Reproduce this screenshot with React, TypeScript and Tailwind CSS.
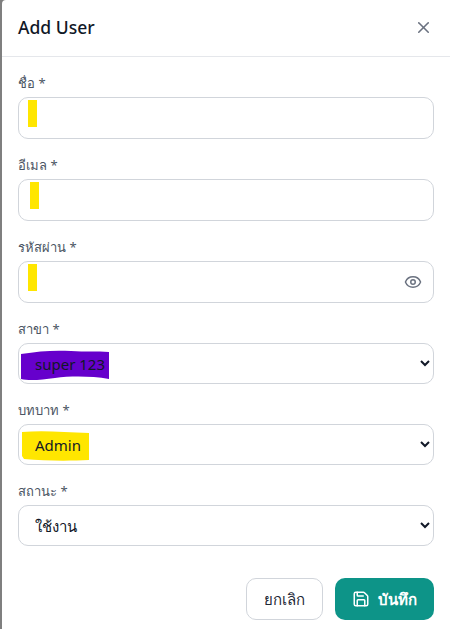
import type { ReactNode } from 'react'
import { X, Eye, Save } from 'lucide-react'

function Label({ text }: { text: string }) {
  return <label className="block text-[13px] font-normal leading-5 text-[#4b5563] mb-1">{text}</label>
}

function TextField({ label, markLeft, children }: { label: string; markLeft: string; children?: ReactNode }) {
  return (
    <div>
      <Label text={label} />
      <div className="relative h-[42px] rounded-[10px] border border-[#d1d5db] bg-white">
        <div className={`absolute top-[2px] h-[27px] w-[9px] bg-[#ffe600] ${markLeft}`} />
        {children}
      </div>
    </div>
  )
}

function SelectField({ label, value, mark }: { label: string; value: string; mark?: ReactNode }) {
  return (
    <div>
      <Label text={label} />
      <div className="relative">
        {mark}
        <select
          defaultValue={value}
          className="relative block h-[41px] w-full rounded-[10px] border border-[#d1d5db] bg-transparent pl-3 pr-1 text-[15px] text-[#111827]"
        >
          <option>{value}</option>
        </select>
      </div>
    </div>
  )
}

export default function App() {
  return (
    <div className="flex h-[629px] w-[450px] overflow-hidden bg-[#7f7f7f] font-['Noto_Sans','Open_Sans',sans-serif]">
      <div className="ml-[2px] flex w-[448px] flex-col rounded-tl-sm bg-white">
        <div className="flex h-[57px] items-center justify-between border-b border-[#e5e7eb] pb-[2px] pl-4 pr-[17px]">
          <h2 className="text-[17.5px] font-medium text-[#111827]">Add User</h2>
          <X size={19} className="text-[#6b7280]" />
        </div>
        <div className="flex flex-col gap-4 px-4 pt-4">
          <TextField label="ชื่อ *" markLeft="left-[9px]" />
          <TextField label="อีเมล *" markLeft="left-[11px]" />
          <TextField label="รหัสผ่าน *" markLeft="left-[9px]">
            <Eye size={18} className="absolute right-[11px] top-[11px] text-[#6b7280]" />
          </TextField>
          <SelectField
            label="สาขา *"
            value="super 123"
            mark={
              <svg className="absolute left-[3px] top-[6px] text-[#6600cc]" width="90" height="34" viewBox="0 0 90 34">
                <path d="M0 5 C18 2 34 1 50 2 C64 3 76 2 88 3 L88 30 C70 27 50 27 34 29 C20 31 8 32 0 30 Z" fill="currentColor" />
              </svg>
            }
          />
          <SelectField
            label="บทบาท *"
            value="Admin"
            mark={
              <svg className="absolute left-[4px] top-[6px] text-[#ffe600]" width="70" height="32" viewBox="0 0 70 32">
                <path d="M0 2 C20 0 42 2 67 3 L67 30 C48 31 24 31 2 29 L0 26 Z" fill="currentColor" />
              </svg>
            }
          />
          <SelectField label="สถานะ *" value="ใช้งาน" />
        </div>
        <div className="mt-[32px] flex justify-end gap-3 pr-4">
          <button className="h-[42px] w-[77px] rounded-[10px] border border-[#d1d5db] bg-white text-[15px] font-medium text-[#1f2937]">
            ยกเลิก
          </button>
          <button className="flex h-[42px] w-[99px] items-center justify-center gap-2 rounded-[10px] bg-[#0d9488] text-[15px] font-semibold text-white">
            <Save size={18} />
            บันทึก
          </button>
        </div>
      </div>
    </div>
  )
}
